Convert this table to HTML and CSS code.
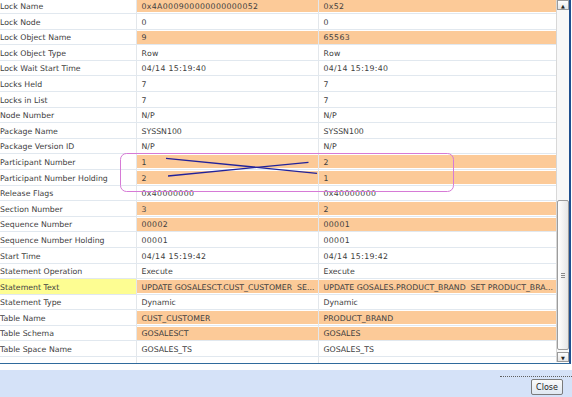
FILE: index.html
```html
<!DOCTYPE html>
<html>
<head>
<meta charset="utf-8">
<link rel="stylesheet" href="styles.css">
</head>
<body>
<div class="dialog">
  <div class="panel">
    <div class="grid">
      <div class="row"><div class="lbl">Lock Name</div><div class="val hl num">0x4A000900000000000052</div><div class="val hl num">0x52</div></div>
      <div class="row"><div class="lbl">Lock Node</div><div class="val num">0</div><div class="val num">0</div></div>
      <div class="row"><div class="lbl">Lock Object Name</div><div class="val hl num">9</div><div class="val hl num">65563</div></div>
      <div class="row"><div class="lbl">Lock Object Type</div><div class="val num">Row</div><div class="val num">Row</div></div>
      <div class="row"><div class="lbl">Lock Wait Start Time</div><div class="val num">04/14 15:19:40</div><div class="val num">04/14 15:19:40</div></div>
      <div class="row"><div class="lbl">Locks Held</div><div class="val num">7</div><div class="val num">7</div></div>
      <div class="row"><div class="lbl">Locks in List</div><div class="val num">7</div><div class="val num">7</div></div>
      <div class="row"><div class="lbl">Node Number</div><div class="val">N/P</div><div class="val">N/P</div></div>
      <div class="row"><div class="lbl">Package Name</div><div class="val">SYSSN100</div><div class="val">SYSSN100</div></div>
      <div class="row"><div class="lbl">Package Version ID</div><div class="val">N/P</div><div class="val">N/P</div></div>
      <div class="row"><div class="lbl">Participant Number</div><div class="val hl num">1</div><div class="val hl num">2</div></div>
      <div class="row"><div class="lbl">Participant Number Holding</div><div class="val hl num">2</div><div class="val hl num">1</div></div>
      <div class="row"><div class="lbl">Release Flags</div><div class="val num">0x40000000</div><div class="val num">0x40000000</div></div>
      <div class="row"><div class="lbl">Section Number</div><div class="val hl num">3</div><div class="val hl num">2</div></div>
      <div class="row"><div class="lbl">Sequence Number</div><div class="val hl num">00002</div><div class="val hl num">00001</div></div>
      <div class="row"><div class="lbl">Sequence Number Holding</div><div class="val num">00001</div><div class="val num">00001</div></div>
      <div class="row"><div class="lbl">Start Time</div><div class="val num">04/14 15:19:42</div><div class="val num">04/14 15:19:42</div></div>
      <div class="row"><div class="lbl">Statement Operation</div><div class="val">Execute</div><div class="val">Execute</div></div>
      <div class="row"><div class="lbl sel">Statement Text</div><div class="val hl">UPDATE GOSALESCT.CUST_CUSTOMER&nbsp; SE...</div><div class="val hl">UPDATE GOSALES.PRODUCT_BRAND&nbsp; SET PRODUCT_BRA...</div></div>
      <div class="row"><div class="lbl">Statement Type</div><div class="val">Dynamic</div><div class="val">Dynamic</div></div>
      <div class="row"><div class="lbl">Table Name</div><div class="val hl">CUST_CUSTOMER</div><div class="val hl">PRODUCT_BRAND</div></div>
      <div class="row"><div class="lbl">Table Schema</div><div class="val hl">GOSALESCT</div><div class="val hl">GOSALES</div></div>
      <div class="row"><div class="lbl">Table Space Name</div><div class="val">GOSALES_TS</div><div class="val">GOSALES_TS</div></div>
      <div class="row"><div class="lbl"></div><div class="val"></div><div class="val"></div></div>
      <svg class="mark" width="572" height="200" viewBox="0 0 572 200">
        <rect x="120.5" y="153.5" width="333" height="38" rx="6" ry="6" fill="none" stroke="#d67ad6" stroke-width="1"/>
        <line x1="166" y1="158.3" x2="317" y2="173.3" stroke="#22229a" stroke-width="1.3"/>
        <line x1="168" y1="176" x2="308.5" y2="162.3" stroke="#22229a" stroke-width="1.3"/>
      </svg>
    </div>
    <div class="scroll">
      <div class="arrow">&#9650;</div>
      <div class="track">
        <div class="thumb"><span class="grip"></span></div>
      </div>
      <div class="arrow">&#9660;</div>
    </div>
  </div>
  <div class="gap"></div>
  <div class="footer">
    <div class="rule"></div>
    <button class="close">Close</button>
  </div>
</div>
</body>
</html>
```

FILE: styles.css
```css
html, body {
  margin: 0;
  padding: 0;
  background: #ffffff;
  overflow: hidden;
}

.dialog {
  width: 572px;
  height: 397px;
  display: flex;
  flex-direction: column;
  font-family: "DejaVu Sans", Verdana, sans-serif;
  font-size: 7.8px;
  color: #404040;
}

.panel {
  height: 363px;
  display: flex;
  border-bottom: 1px solid #2f6a9c;
  border-right: 2px solid #1f4f8f;
  width: 569px;
  box-sizing: content-box;
  overflow: hidden;
}

.grid {
  position: relative;
  width: 556px;
  flex: none;
  margin-top: -1.6px;
}

.row {
  display: grid;
  grid-template-columns: 137px 182px 237px;
  height: 15.6px;
  box-sizing: border-box;
  border-bottom: 1px solid #e1e8ef;
}

.lbl,
.val {
  box-sizing: border-box;
  height: 14.6px;
  line-height: 13px;
  white-space: nowrap;
  overflow: hidden;
  padding: 1.6px 0 0 0;
  border-right: 1px solid #e3e7eb;
}

.lbl {
  letter-spacing: 0;
}

.lbl.sel {
  background: #fdfd92;
}

.val {
  text-indent: 4.5px;
  letter-spacing: 0;
}

.val.num {
  letter-spacing: 0.35px;
}

.val:last-child {
  border-right: 0;
}

.val.hl {
  background: linear-gradient(#ffffff 0, #ffffff 1.3px, #fcca98 1.3px, #fcca98 14.3px, #ffffff 14.3px);
}

.mark {
  position: absolute;
  left: 0;
  top: 1.6px;
  pointer-events: none;
}

.scroll {
  width: 12px;
  display: flex;
  flex-direction: column;
  border-left: 1px solid #d8d8d8;
  background: #f4f4f4;
  height: 362px;
}

.arrow {
  height: 10px;
  font-size: 5px;
  line-height: 10px;
  text-align: center;
  color: #222;
  border: 1px solid #9a9a9a;
  box-sizing: border-box;
  background: linear-gradient(#ffffff, #e4e4e4);
}

.track {
  flex: 1;
  display: flex;
  flex-direction: column;
  justify-content: flex-start;
  padding-top: 190px;
  background: #f8f8f8;
}

.thumb {
  height: 150px;
  box-sizing: border-box;
  border: 1px solid #9c9c9c;
  border-radius: 2px;
  background: linear-gradient(90deg, #ffffff, #e6e6e6);
  display: flex;
  align-items: center;
  justify-content: center;
}

.grip {
  width: 4px;
  height: 5px;
  background: repeating-linear-gradient(#8a8a8a 0, #8a8a8a 1px, transparent 1px, transparent 2px);
}

.gap {
  height: 6px;
}

.footer {
  flex: 1;
  background: #d5e2f8;
  display: flex;
  flex-direction: column;
  align-items: flex-end;
}

.rule {
  width: 72px;
  margin-top: 6px;
  border-top: 1px dotted #606060;
}

.close {
  margin: 2px 9px 0 0;
  width: 32px;
  height: 16px;
  padding: 0;
  font-family: "DejaVu Sans", Verdana, sans-serif;
  font-size: 8px;
  color: #222;
  border: 1px solid #7a7a7a;
  border-radius: 2px;
  background: linear-gradient(#fafafa, #dfe8f2);
}
```
